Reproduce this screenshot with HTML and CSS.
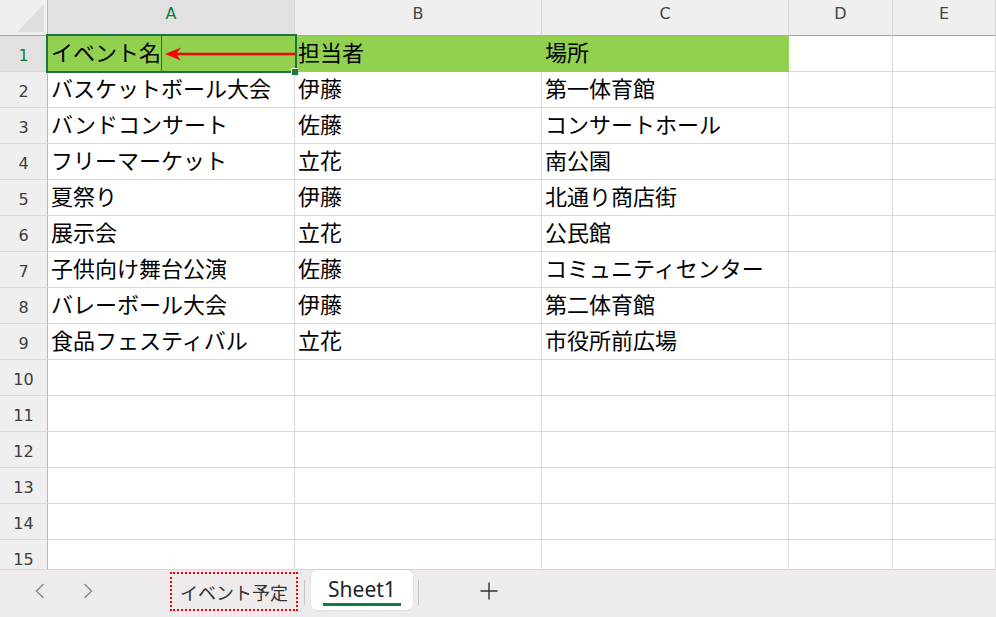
FILE: index.html
```html
<!DOCTYPE html>
<html lang="ja">
<head>
<meta charset="utf-8">
<title>イベント予定</title>
<link rel="stylesheet" href="styles.css">
</head>
<body>
<div class="app">
  <div class="sheet">
    <div class="grid">
      <div class="corner"><span class="tri"></span></div>
      <div class="colh sel">A</div><div class="colh">B</div><div class="colh">C</div><div class="colh">D</div><div class="colh">E</div>

      <div class="rowh sel">1</div><div class="c fill">イベント名</div><div class="c fill">担当者</div><div class="c fill">場所</div><div class="c"></div><div class="c"></div>
      <div class="rowh">2</div><div class="c">バスケットボール大会</div><div class="c">伊藤</div><div class="c">第一体育館</div><div class="c"></div><div class="c"></div>
      <div class="rowh">3</div><div class="c">バンドコンサート</div><div class="c">佐藤</div><div class="c">コンサートホール</div><div class="c"></div><div class="c"></div>
      <div class="rowh">4</div><div class="c">フリーマーケット</div><div class="c">立花</div><div class="c">南公園</div><div class="c"></div><div class="c"></div>
      <div class="rowh">5</div><div class="c">夏祭り</div><div class="c">伊藤</div><div class="c">北通り商店街</div><div class="c"></div><div class="c"></div>
      <div class="rowh">6</div><div class="c">展示会</div><div class="c">立花</div><div class="c">公民館</div><div class="c"></div><div class="c"></div>
      <div class="rowh">7</div><div class="c">子供向け舞台公演</div><div class="c">佐藤</div><div class="c">コミュニティセンター</div><div class="c"></div><div class="c"></div>
      <div class="rowh">8</div><div class="c">バレーボール大会</div><div class="c">伊藤</div><div class="c">第二体育館</div><div class="c"></div><div class="c"></div>
      <div class="rowh">9</div><div class="c">食品フェスティバル</div><div class="c">立花</div><div class="c">市役所前広場</div><div class="c"></div><div class="c"></div>
      <div class="rowh">10</div><div class="c"></div><div class="c"></div><div class="c"></div><div class="c"></div><div class="c"></div>
      <div class="rowh">11</div><div class="c"></div><div class="c"></div><div class="c"></div><div class="c"></div><div class="c"></div>
      <div class="rowh">12</div><div class="c"></div><div class="c"></div><div class="c"></div><div class="c"></div><div class="c"></div>
      <div class="rowh">13</div><div class="c"></div><div class="c"></div><div class="c"></div><div class="c"></div><div class="c"></div>
      <div class="rowh">14</div><div class="c"></div><div class="c"></div><div class="c"></div><div class="c"></div><div class="c"></div>
      <div class="rowh">15</div><div class="c"></div><div class="c"></div><div class="c"></div><div class="c"></div><div class="c"></div>
    </div>
    <div class="selbox"><span class="handle"></span></div>
    <svg class="overlay" width="996" height="569" viewBox="0 0 996 569">
      <line x1="161.5" y1="36" x2="161.5" y2="71" stroke="#6a36a8" stroke-width="1"/>
      <line x1="295" y1="54" x2="176" y2="54" stroke="#ff0000" stroke-width="2.5"/>
      <polygon points="165,54 181,47.5 176,54 181,60.5" fill="#ff0000"/>
    </svg>
  </div>
  <div class="tabbar">
    <div class="nav">
      <svg width="10" height="16" viewBox="0 0 10 16"><polyline points="8.5,1 1.5,8 8.5,15" fill="none" stroke="#8e8e8e" stroke-width="1.6"/></svg>
    </div>
    <div class="nav">
      <svg width="10" height="16" viewBox="0 0 10 16"><polyline points="1.5,1 8.5,8 1.5,15" fill="none" stroke="#8e8e8e" stroke-width="1.6"/></svg>
    </div>
    <div class="renamed">イベント予定</div>
    <div class="sep"></div>
    <div class="tab">Sheet1<span class="underline"></span></div>
    <div class="sep sep2"></div>
    <div class="add">
      <svg width="18" height="18" viewBox="0 0 18 18"><path d="M9 0.5V17.5M0.5 9H17.5" stroke="#333" stroke-width="1.4" fill="none"/></svg>
    </div>
  </div>
</div>
</body>
</html>
```
FILE: styles.css
```css
* { box-sizing: border-box; }
html, body { margin: 0; padding: 0; }
body {
  width: 996px;
  height: 617px;
  overflow: hidden;
  background: #fff;
  font-family: "Noto Sans CJK JP", "Noto Sans", sans-serif;
}
.app { display: flex; flex-direction: column; height: 617px; }
.sheet { position: relative; height: 569px; overflow: hidden; flex: none; }
.grid {
  display: grid;
  grid-template-columns: 48px 247px 247px 247px 104px 1fr;
  grid-auto-rows: 36px;
}
.corner {
  position: relative;
  background: #efefef;
  border-right: 1px solid #b8b8b8;
  border-bottom: 1px solid #a6a6a6;
}
.tri {
  position: absolute;
  left: 17px;
  top: 4px;
  width: 27px;
  height: 28px;
  background: #dedede;
  clip-path: polygon(100% 0, 100% 100%, 0 100%);
}
.colh {
  background: #efefef;
  border-right: 1px solid #d6d6d6;
  border-bottom: 1px solid #a6a6a6;
  display: flex;
  align-items: center;
  justify-content: center;
  padding-bottom: 9px;
  font-family: "DejaVu Sans", sans-serif;
  font-size: 16px;
  color: #444;
}
.colh.sel { background: #e1e1e1; color: #107c41; }
.rowh {
  background: #efefef;
  border-right: 1px solid #b8b8b8;
  border-bottom: 1px solid #dadada;
  display: flex;
  align-items: center;
  justify-content: center;
  padding-top: 3px;
  font-family: "DejaVu Sans", sans-serif;
  font-size: 16px;
  color: #3c3c3c;
}
.rowh.sel { background: #e1e1e1; color: #107c41; }
.c {
  border-right: 1px solid #dadada;
  border-bottom: 1px solid #dadada;
  display: flex;
  align-items: center;
  padding-left: 3px;
  padding-bottom: 6px;
  font-size: 22px;
  color: #000;
  white-space: nowrap;
  overflow: hidden;
}
.c.fill { background: #92d050; border-color: #92d050; }
.selbox {
  position: absolute;
  left: 46px;
  top: 34px;
  width: 251px;
  height: 39px;
  border: 2px solid #1f7244;
}
.handle {
  position: absolute;
  right: -3px;
  bottom: -4px;
  width: 7px;
  height: 7px;
  background: #1f7244;
  border-left: 1px solid #fff;
  border-top: 1px solid #fff;
}
.overlay { position: absolute; left: 0; top: 0; pointer-events: none; }
.tabbar {
  height: 48px;
  flex: none;
  background: #efeaeb;
  border-top: 1px solid #d9d5d5;
  display: flex;
  align-items: flex-start;
  padding-left: 16px;
}
.nav {
  width: 48px;
  height: 42px;
  display: flex;
  align-items: center;
  justify-content: center;
}
.renamed {
  margin-left: 58px;
  margin-top: 2px;
  width: 128px;
  height: 39px;
  border: 2px dotted #ff0000;
  display: flex;
  align-items: center;
  justify-content: center;
  font-size: 18px;
  color: #333;
}
.sep {
  width: 1px;
  height: 25px;
  margin-top: 10px;
  margin-left: 6px;
  background: #c9c5c5;
}
.tab {
  position: relative;
  margin-left: 6px;
  width: 102px;
  height: 40px;
  background: #fff;
  border-radius: 6px;
  box-shadow: 0 0 0 1px rgba(0, 0, 0, 0.04);
  display: flex;
  align-items: center;
  justify-content: center;
  padding-bottom: 3px;
  font-family: "Noto Sans", sans-serif;
  font-size: 21px;
  color: #222;
}
.underline {
  position: absolute;
  left: 12px;
  width: 78px;
  bottom: 4px;
  height: 3px;
  background: #107c41;
}
.sep2 { margin-left: 5px; }
.add {
  margin-left: 50px;
  width: 40px;
  height: 42px;
  display: flex;
  align-items: center;
  justify-content: center;
}
```
